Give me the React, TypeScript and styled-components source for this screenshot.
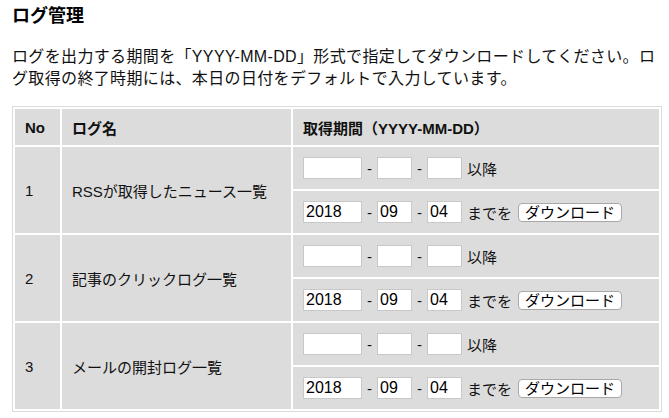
import React from 'react'
import styled, { createGlobalStyle } from 'styled-components'

const GlobalStyle = createGlobalStyle`
  body {
    margin: 0;
    background: #fff;
    color: #111;
    font-family: "Liberation Sans", "Noto Sans CJK JP", sans-serif;
  }
`

const Page = styled.div`
  display: flex;
  flex-direction: column;
  padding: 4px 8px 0 12px;
  width: 650px;
`

const Title = styled.h2`
  margin: 0;
  font-size: 18px;
  line-height: 24px;
  font-weight: bold;
  color: #000;
`

const Description = styled.p`
  margin: 18px 0 16px;
  font-size: 16px;
  line-height: 22px;
  letter-spacing: 0.35px;
  width: 650px;
`

const Table = styled.table`
  width: 650px;
  table-layout: fixed;
  border: 1px solid #dcdcdc;
  border-collapse: separate;
  border-spacing: 2px;
  font-size: 15px;
`

const HeadCell = styled.th`
  height: 36px;
  padding: 0 10px;
  background: #dcdcdc;
  text-align: left;
  font-weight: bold;
  box-sizing: border-box;
`

const Cell = styled.td`
  height: 42px;
  padding: 0 10px;
  background: #dcdcdc;
  vertical-align: middle;
  box-sizing: border-box;
`

const DateRow = styled.div`
  display: flex;
  align-items: center;
  gap: 5px;
`

const DateInput = styled.input<{ $w: number }>`
  box-sizing: border-box;
  width: ${p => p.$w}px;
  height: 22px;
  margin: 0;
  padding: 0 2px;
  border: 1px solid #c8c8c8;
  background: #fff;
  font-family: "Liberation Sans", sans-serif;
  font-size: 16px;
  color: #000;
  outline: none;
`

const Label = styled.span`
  font-size: 15px;
`

const DownloadButton = styled.button`
  height: 19px;
  margin: 0 0 0 1px;
  padding: 0 6px;
  border: 1px solid #a8a8a8;
  border-radius: 4px;
  background: #fff;
  font-family: "Liberation Sans", "Noto Sans CJK JP", sans-serif;
  font-size: 15px;
  line-height: 17px;
  color: #000;
`

type DateFieldsProps = { y?: string; m?: string; d?: string }

const DateFields: React.FC<DateFieldsProps> = ({ y = '', m = '', d = '' }) => (
  <>
    <DateInput $w={59} defaultValue={y} />
    <Label>-</Label>
    <DateInput $w={35} defaultValue={m} />
    <Label>-</Label>
    <DateInput $w={35} defaultValue={d} />
  </>
)

const logs = [
  { no: 1, name: 'RSSが取得したニュース一覧' },
  { no: 2, name: '記事のクリックログ一覧' },
  { no: 3, name: 'メールの開封ログ一覧' },
]

const App: React.FC = () => {
  return (
    <Page>
      <GlobalStyle />
      <Title>ログ管理</Title>
      <Description>
        ログを出力する期間を「YYYY-MM-DD」形式で指定してダウンロードしてください。ログ取得の終了時期には、本日の日付をデフォルトで入力しています。
      </Description>
      <Table>
        <colgroup>
          <col style={{ width: 45 }} />
          <col style={{ width: 229 }} />
          <col />
        </colgroup>
        <thead>
          <tr>
            <HeadCell>No</HeadCell>
            <HeadCell>ログ名</HeadCell>
            <HeadCell>取得期間（YYYY-MM-DD）</HeadCell>
          </tr>
        </thead>
        <tbody>
          {logs.map(log => (
            <React.Fragment key={log.no}>
              <tr>
                <Cell rowSpan={2}>{log.no}</Cell>
                <Cell rowSpan={2}>{log.name}</Cell>
                <Cell>
                  <DateRow>
                    <DateFields />
                    <Label>以降</Label>
                  </DateRow>
                </Cell>
              </tr>
              <tr>
                <Cell>
                  <DateRow>
                    <DateFields y="2018" m="09" d="04" />
                    <Label>までを</Label>
                    <DownloadButton>ダウンロード</DownloadButton>
                  </DateRow>
                </Cell>
              </tr>
            </React.Fragment>
          ))}
        </tbody>
      </Table>
    </Page>
  )
}

export default App
